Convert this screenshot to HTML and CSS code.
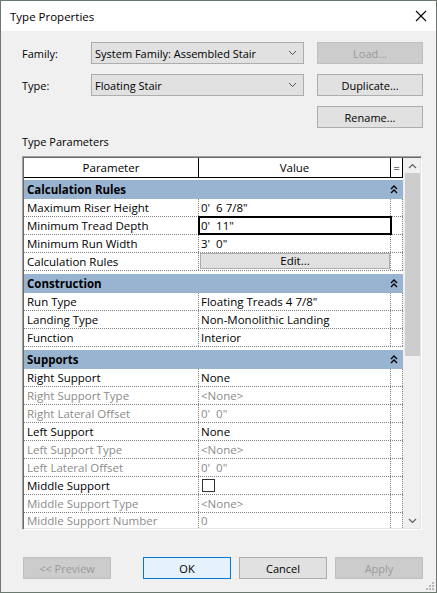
FILE: index.html
```html
<!DOCTYPE html>
<html lang="en">
<head>
  <meta charset="UTF-8">
  <title>Type Properties</title>
  <link rel="stylesheet" href="styles.css">
</head>
<body>
<div class="window">
  <div class="titlebar">
    <div class="title">Type Properties</div>
    <svg class="close" width="12" height="12" viewBox="0 0 12 12">
      <path d="M1 1 L11 11 M11 1 L1 11" stroke="#000" stroke-width="1.1" fill="none"/>
    </svg>
  </div>

  <div class="content">
    <div class="form">
      <div class="label">Family:</div>
      <div class="combo">
        <span>System Family: Assembled Stair</span>
        <svg width="9" height="6" viewBox="0 0 9 6"><path d="M1 1 L4.5 4.5 L8 1" stroke="#555" fill="none"/></svg>
      </div>
      <div class="btn disabled">Load...</div>

      <div class="label">Type:</div>
      <div class="combo">
        <span>Floating Stair</span>
        <svg width="9" height="6" viewBox="0 0 9 6"><path d="M1 1 L4.5 4.5 L8 1" stroke="#555" fill="none"/></svg>
      </div>
      <div class="btn">Duplicate...</div>

      <div></div>
      <div></div>
      <div class="btn">Rename...</div>
    </div>

    <div class="group-label">Type Parameters</div>

    <div class="grid">
      <div class="table">
        <div class="head">
          <div class="c-param">Parameter</div>
          <div class="c-value">Value</div>
          <div class="c-eq">=</div>
        </div>

        <div class="section first">
          <span>Calculation Rules</span>
          <svg width="8" height="9" viewBox="0 0 8 9"><path d="M1 4 L4 1 L7 4 M1 8 L4 5 L7 8" stroke="#000" stroke-width="1.3" fill="none"/></svg>
        </div>
        <div class="row"><div class="c-param">Maximum Riser Height</div><div class="c-value">0'  6 7/8"</div><div class="c-eq"></div></div>
        <div class="row"><div class="c-param">Minimum Tread Depth</div><div class="c-value focus">0'  11"</div><div class="c-eq"></div></div>
        <div class="row"><div class="c-param">Minimum Run Width</div><div class="c-value">3'  0"</div><div class="c-eq"></div></div>
        <div class="row"><div class="c-param">Calculation Rules</div><div class="c-value"><div class="edit">Edit...</div></div><div class="c-eq"></div></div>

        <div class="section">
          <span>Construction</span>
          <svg width="8" height="9" viewBox="0 0 8 9"><path d="M1 4 L4 1 L7 4 M1 8 L4 5 L7 8" stroke="#000" stroke-width="1.3" fill="none"/></svg>
        </div>
        <div class="row"><div class="c-param">Run Type</div><div class="c-value">Floating Treads 4 7/8"</div><div class="c-eq"></div></div>
        <div class="row"><div class="c-param">Landing Type</div><div class="c-value">Non-Monolithic Landing</div><div class="c-eq"></div></div>
        <div class="row"><div class="c-param">Function</div><div class="c-value">Interior</div><div class="c-eq"></div></div>

        <div class="section">
          <span>Supports</span>
          <svg width="8" height="9" viewBox="0 0 8 9"><path d="M1 4 L4 1 L7 4 M1 8 L4 5 L7 8" stroke="#000" stroke-width="1.3" fill="none"/></svg>
        </div>
        <div class="row"><div class="c-param">Right Support</div><div class="c-value">None</div><div class="c-eq"></div></div>
        <div class="row gray"><div class="c-param">Right Support Type</div><div class="c-value">&lt;None&gt;</div><div class="c-eq"></div></div>
        <div class="row gray"><div class="c-param">Right Lateral Offset</div><div class="c-value">0'  0"</div><div class="c-eq"></div></div>
        <div class="row"><div class="c-param">Left Support</div><div class="c-value">None</div><div class="c-eq"></div></div>
        <div class="row gray"><div class="c-param">Left Support Type</div><div class="c-value">&lt;None&gt;</div><div class="c-eq"></div></div>
        <div class="row gray"><div class="c-param">Left Lateral Offset</div><div class="c-value">0'  0"</div><div class="c-eq"></div></div>
        <div class="row"><div class="c-param">Middle Support</div><div class="c-value"><div class="check"></div></div><div class="c-eq"></div></div>
        <div class="row gray"><div class="c-param">Middle Support Type</div><div class="c-value">&lt;None&gt;</div><div class="c-eq"></div></div>
        <div class="row gray last"><div class="c-param">Middle Support Number</div><div class="c-value">0</div><div class="c-eq"></div></div>
      </div>

      <div class="scrollbar">
        <div class="sb-btn">
          <svg width="9" height="6" viewBox="0 0 9 6"><path d="M1 5 L4.5 1.5 L8 5" stroke="#606060" stroke-width="1.2" fill="none"/></svg>
        </div>
        <div class="thumb"></div>
        <div class="track"></div>
        <div class="sb-btn">
          <svg width="9" height="6" viewBox="0 0 9 6"><path d="M1 1 L4.5 4.5 L8 1" stroke="#606060" stroke-width="1.2" fill="none"/></svg>
        </div>
      </div>
    </div>

    <div class="buttons">
      <div class="btn disabled preview">&lt;&lt; Preview</div>
      <div class="btn default">OK</div>
      <div class="btn">Cancel</div>
      <div class="btn disabled">Apply</div>
    </div>
  </div>

  <svg class="grip" width="10" height="10" viewBox="0 0 10 10">
    <rect x="7" y="1" width="2" height="2" fill="#b8b8b8"/>
    <rect x="4" y="4" width="2" height="2" fill="#b8b8b8"/>
    <rect x="7" y="4" width="2" height="2" fill="#b8b8b8"/>
    <rect x="1" y="7" width="2" height="2" fill="#b8b8b8"/>
    <rect x="4" y="7" width="2" height="2" fill="#b8b8b8"/>
    <rect x="7" y="7" width="2" height="2" fill="#b8b8b8"/>
  </svg>
</div>
</body>
</html>
```

FILE: styles.css
```css
body {
  margin: 0;
  font-family: "Open Sans", "Noto Sans", sans-serif;
  font-size: 11px;
  color: #000;
}

.window {
  position: relative;
  width: 437px;
  height: 593px;
  box-sizing: border-box;
  border: 1px solid #6a7870;
  background: #f0f0f0;
}

.titlebar {
  height: 30px;
  background: #fff;
  display: flex;
  align-items: center;
  justify-content: space-between;
  padding: 0 9px 0 9px;
}

.title {
  font-size: 11.5px;
}

.close {
  margin-top: -1px;
}

.content {
  padding: 11px 0 0 21px;
}

/* top form */
.form {
  display: grid;
  grid-template-columns: 69px 213px 106px;
  grid-template-rows: 22px 22px 22px;
  column-gap: 0;
  row-gap: 10px;
}

.form .btn {
  margin-left: 13px;
}

.label {
  display: flex;
  align-items: center;
}

.combo {
  display: flex;
  align-items: center;
  justify-content: space-between;
  box-sizing: border-box;
  border: 1px solid #adadad;
  background: #e1e1e1;
  padding: 0 6px 0 3px;
}

.btn {
  display: flex;
  align-items: center;
  justify-content: center;
  box-sizing: border-box;
  width: 106px;
  height: 22px;
  border: 1px solid #adadad;
  background: #e1e1e1;
}

.btn.disabled {
  background: #cccccc;
  border-color: #bfbfbf;
  color: #9a9a9a;
}

.btn.default {
  border-color: #0078d7;
  background: #e5f1fb;
}

.group-label {
  margin: 6px 0 6px 0;
  line-height: 16px;
}

/* property grid */
.grid {
  display: flex;
  width: 400px;
  height: 374px;
  box-sizing: border-box;
  border: 1px solid;
  border-color: #a0a0a0 #ffffff #ffffff #a0a0a0;
  box-shadow: inset 1px 1px 0 #696969, inset -1px -1px 0 #e3e3e3;
  padding: 1px;
  background: #fff;
}

.table {
  flex: 0 0 379px;
  overflow: hidden;
  background: #fff;
  font-size: 11.5px;
}

.head {
  display: flex;
  height: 20px;
  box-sizing: border-box;
  border-bottom: 1px solid #000;
}

.head > div {
  border-right: 1px solid #000;
  text-align: center;
  line-height: 19px;
}

.c-param {
  flex: 0 0 175px;
  box-sizing: border-box;
  padding-left: 3px;
  white-space: nowrap;
}

.c-value {
  flex: 0 0 192px;
  box-sizing: border-box;
  padding-left: 2px;
  white-space: pre;
}

.c-eq {
  flex: 0 0 12px;
  box-sizing: border-box;
}

.head .c-param,
.head .c-value {
  padding-left: 0;
}

.section {
  display: flex;
  align-items: center;
  justify-content: space-between;
  height: 19px;
  margin-top: 3px;
  padding: 0 5px 0 3px;
  background: #99b4d1;
  font-weight: bold;
}

.section.first {
  margin-top: 2px;
}

.row {
  display: flex;
  height: 18px;
  box-sizing: border-box;
  border-bottom: 1px dotted #808080;
  line-height: 17px;
}

.row.last {
  line-height: 15px;
}

.row > div {
  border-right: 1px dotted #808080;
}

.row.gray {
  color: #8c8c8c;
}

.focus {
  outline: 2px solid #000;
  outline-offset: -1px;
}

.edit {
  height: 16px;
  margin: 0 0 0 -1px;
  box-sizing: border-box;
  border: 1px solid #adadad;
  background: #e1e1e1;
  text-align: center;
  line-height: 14px;
}

.check {
  width: 13px;
  height: 13px;
  box-sizing: border-box;
  margin: 2px 0 0 1px;
  border: 1px solid #333;
  background: #fff;
}

/* scrollbar */
.scrollbar {
  flex: 0 0 17px;
  display: flex;
  flex-direction: column;
  background: #f0f0f0;
}

.sb-btn {
  height: 15px;
  display: flex;
  align-items: center;
  justify-content: center;
  padding-left: 2px;
}

.thumb {
  height: 183px;
  margin-left: 2px;
  background: #cdcdcd;
}

.track {
  flex: 1;
}

/* bottom buttons */
.buttons {
  display: flex;
  gap: 8px;
  margin: 27px 0 0 1px;
}

.buttons .btn {
  width: 88px;
}

.buttons .preview {
  margin-right: 24px;
}

.grip {
  position: absolute;
  right: 1px;
  bottom: 1px;
}
```
